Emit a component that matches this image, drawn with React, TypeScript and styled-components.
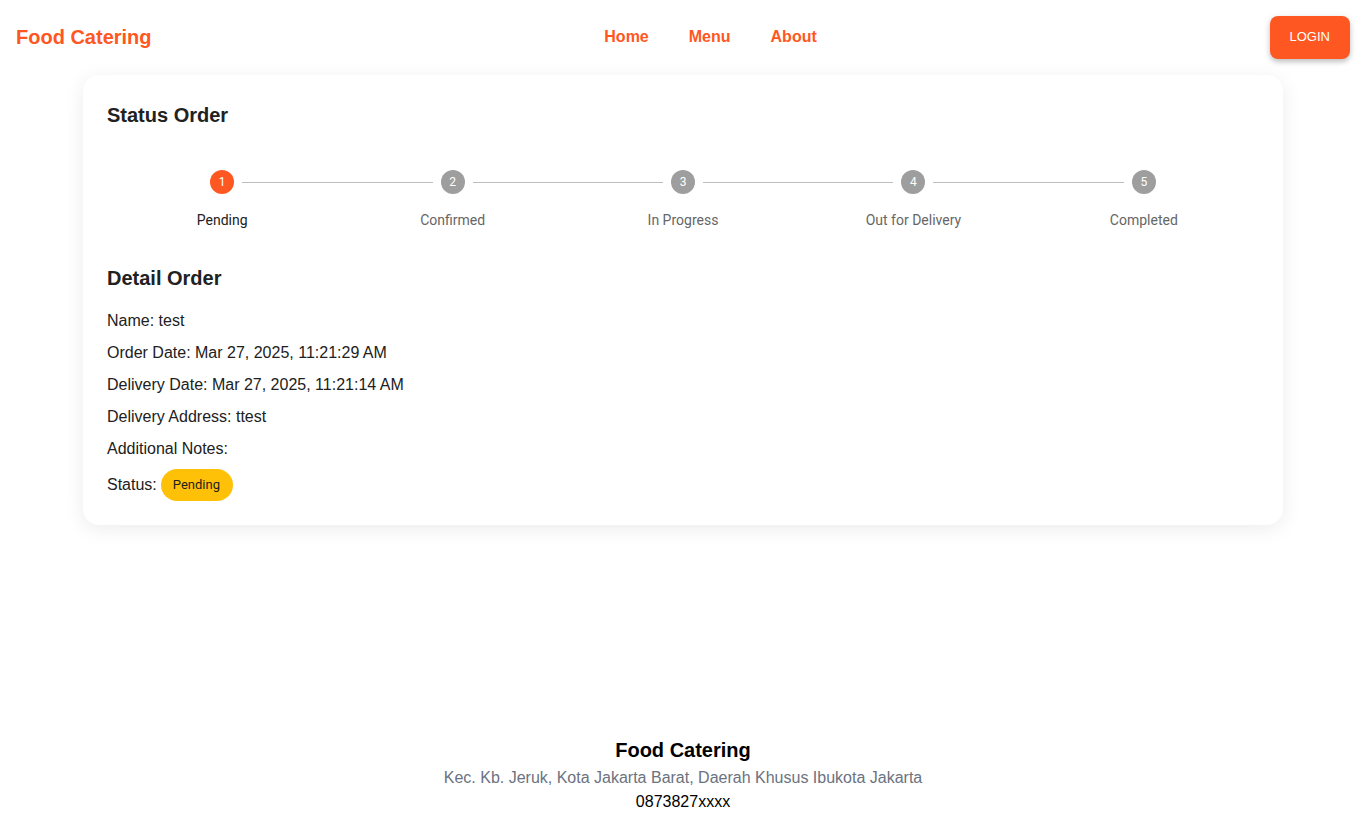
import React from 'react'
import styled, { createGlobalStyle } from 'styled-components'

const ORANGE = '#ff5722'

const GlobalStyle = createGlobalStyle`
  html, body {
    margin: 0;
    padding: 0;
    background: #ffffff;
    font-family: "Liberation Sans", Arial, sans-serif;
    color: #212121;
  }
  * {
    box-sizing: border-box;
  }
`

const Page = styled.div`
  min-height: 100vh;
  display: flex;
  flex-direction: column;
`

const NavBar = styled.header`
  display: flex;
  align-items: center;
  justify-content: space-between;
  padding: 16px;
`

const Brand = styled.div`
  font-size: 20px;
  font-weight: 700;
  color: ${ORANGE};
`

const NavLinks = styled.nav`
  display: flex;
  gap: 40px;
  margin-top: -2px;
`

const NavLink = styled.a`
  font-size: 16px;
  font-weight: 700;
  color: ${ORANGE};
  text-decoration: none;
  cursor: pointer;
`

const LoginButton = styled.button`
  background: ${ORANGE};
  color: #ffffff;
  border: none;
  border-radius: 8px;
  padding: 11px 20px 13px;
  height: 43px;
  font-family: "Liberation Sans", Arial, sans-serif;
  font-size: 13px;
  line-height: 19px;
  text-transform: uppercase;
  box-shadow: 0 3px 5px rgba(0, 0, 0, 0.2), 0 1px 10px rgba(0, 0, 0, 0.08);
  cursor: pointer;
`

const Main = styled.main`
  flex: 1;
  display: flex;
  justify-content: center;
`

const Card = styled.section`
  width: 1200px;
  background: #ffffff;
  border-radius: 16px;
  padding: 24px;
  box-shadow: 0 4px 20px rgba(0, 0, 0, 0.08);
  align-self: flex-start;
`

const SectionTitle = styled.h2<{ $gap: number }>`
  margin: 0 0 ${(p) => p.$gap}px;
  font-size: 20px;
  line-height: 32px;
  font-weight: 700;
  color: #212121;
`

const Stepper = styled.div`
  display: flex;
  margin-bottom: 32px;
`

const Step = styled.div`
  flex: 1;
  position: relative;
  display: flex;
  flex-direction: column;
  align-items: center;
`

const Connector = styled.span`
  position: absolute;
  top: 12px;
  left: calc(-50% + 20px);
  right: calc(50% + 20px);
  border-top: 1px solid #bdbdbd;
`

const StepIcon = styled.div<{ $active: boolean }>`
  width: 24px;
  height: 24px;
  border-radius: 50%;
  background: ${(p) => (p.$active ? ORANGE : '#9e9e9e')};
  color: #ffffff;
  font-family: Roboto, "Liberation Sans", sans-serif;
  font-size: 12px;
  display: flex;
  align-items: center;
  justify-content: center;
`

const StepLabel = styled.div<{ $active: boolean }>`
  margin-top: 16px;
  font-family: Roboto, "Liberation Sans", sans-serif;
  font-size: 14px;
  line-height: 20px;
  color: ${(p) => (p.$active ? '#212121' : '#666666')};
`

const DetailList = styled.div`
  display: flex;
  flex-direction: column;
  gap: 8px;
  padding-top: 7px;
`

const DetailRow = styled.div`
  font-size: 16px;
  line-height: 24px;
  color: #212121;
  display: flex;
  align-items: center;
  gap: 4px;
`

const StatusChip = styled.span`
  display: inline-flex;
  align-items: center;
  height: 32px;
  padding: 0 13px 0 12px;
  border-radius: 16px;
  background: #ffc107;
  color: #212121;
  font-family: Roboto, "Liberation Sans", sans-serif;
  font-size: 13px;
`

const Footer = styled.footer`
  text-align: center;
  padding: 16px;
`

const FooterTitle = styled.div`
  font-size: 20px;
  font-weight: 700;
  line-height: 28px;
  color: #000000;
`

const FooterText = styled.div<{ $muted?: boolean }>`
  font-size: 16px;
  line-height: 24px;
  margin-top: ${(p) => (p.$muted ? 2 : 0)}px;
  color: ${(p) => (p.$muted ? '#6b7280' : '#000000')};
`

const steps = ['Pending', 'Confirmed', 'In Progress', 'Out for Delivery', 'Completed']

const App = () => {
  const activeStep = 0

  return (
    <>
      <GlobalStyle />
      <Page>
        <NavBar>
          <Brand>Food Catering</Brand>
          <NavLinks>
            <NavLink>Home</NavLink>
            <NavLink>Menu</NavLink>
            <NavLink>About</NavLink>
          </NavLinks>
          <LoginButton>Login</LoginButton>
        </NavBar>

        <Main>
          <Card>
            <SectionTitle $gap={39}>Status Order</SectionTitle>
            <Stepper>
              {steps.map((label, i) => (
                <Step key={label}>
                  {i > 0 && <Connector />}
                  <StepIcon $active={i === activeStep}>{i + 1}</StepIcon>
                  <StepLabel $active={i === activeStep}>{label}</StepLabel>
                </Step>
              ))}
            </Stepper>

            <SectionTitle $gap={8}>Detail Order</SectionTitle>
            <DetailList>
              <DetailRow>Name: test</DetailRow>
              <DetailRow>Order Date: Mar 27, 2025, 11:21:29 AM</DetailRow>
              <DetailRow>Delivery Date: Mar 27, 2025, 11:21:14 AM</DetailRow>
              <DetailRow>Delivery Address: ttest</DetailRow>
              <DetailRow>Additional Notes: </DetailRow>
              <DetailRow>
                Status: <StatusChip>Pending</StatusChip>
              </DetailRow>
            </DetailList>
          </Card>
        </Main>

        <Footer>
          <FooterTitle>Food Catering</FooterTitle>
          <FooterText $muted>
            Kec. Kb. Jeruk, Kota Jakarta Barat, Daerah Khusus Ibukota Jakarta
          </FooterText>
          <FooterText>0873827xxxx</FooterText>
        </Footer>
      </Page>
    </>
  )
}

export default App
